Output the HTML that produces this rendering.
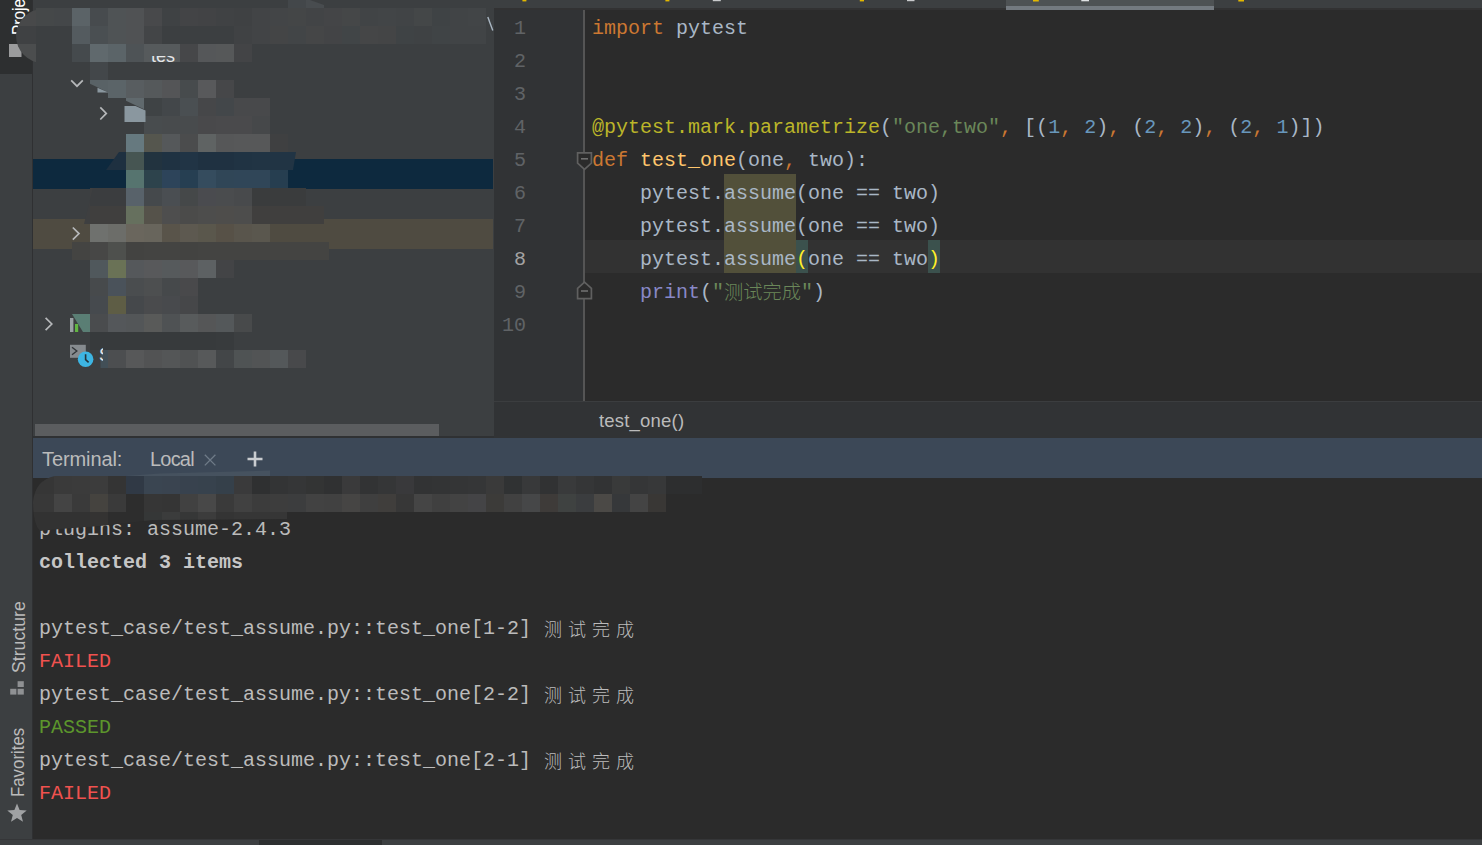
<!DOCTYPE html>
<html lang="zh">
<head>
<meta charset="utf-8">
<title>test_assume.py - PyCharm</title>
<style>
html,body{margin:0;padding:0;}
body{width:1482px;height:845px;overflow:hidden;background:#2b2b2b;position:relative;
  font-family:"Liberation Sans","Noto Sans CJK SC",sans-serif;color:#bbbbbb;}
.abs{position:absolute;}
svg{display:block;}
/* left tool strip */
#strip{left:0;top:0;width:33px;height:839px;background:#3c3f41;}
#strip .sel{left:0;top:0;width:32px;height:74px;background:#2d2f30;}
#strip .edge{left:32px;top:0;width:1px;height:839px;background:#2f3032;}
.vtxt{position:absolute;transform-origin:0 0;transform:rotate(-90deg);white-space:nowrap;font-size:18px;color:#bbbbbb;line-height:20px;height:20px;}
/* project panel */
#proj{left:33px;top:0;width:461px;height:438px;background:#3c3f41;overflow:hidden;}
#proj .rowsel{left:0;top:159px;width:460px;height:30px;background:#0d293e;}
#proj .rowhl{left:0;top:219px;width:460px;height:30px;background:#4f4b41;}
#proj .hscroll{left:2px;top:424px;width:404px;height:12px;background:#5b5d5f;}
#proj .hbot{left:0;top:436px;width:461px;height:2px;background:#2f3133;}
#proj .ptxt{position:absolute;font-size:18px;color:#bbbbbb;line-height:30px;white-space:nowrap;}
/* editor */
#tabs{left:494px;top:0;width:988px;height:7.5px;background:#3c3f41;}
#tabs2{left:494px;top:7.5px;width:988px;height:2.5px;background:#323233;}
#tabsel{left:1006px;top:0;width:208px;height:6px;background:#4e5254;}
#tabsel2{left:1006px;top:6px;width:208px;height:4px;background:#747a80;}
#gutter{left:494px;top:10px;width:89px;height:391px;background:#313335;}
#gline{left:583px;top:10px;width:2px;height:391px;background:#555555;}
#editor{left:585px;top:10px;width:897px;height:391px;background:#2b2b2b;}
#curline{left:585px;top:240px;width:897px;height:33px;background:#323232;}
#usage{left:724px;top:174px;width:72px;height:99px;background:#52503a;}
.brace{top:240px;width:12px;height:33px;background:#3b514d;}
.mono{font-family:"Liberation Mono","Noto Sans CJK SC",monospace;font-size:20px;white-space:pre;}
.ln{position:absolute;left:494px;width:32px;text-align:right;color:#606366;height:33px;line-height:33px;}
.ln.cur{color:#a4a3a3;}
.cl{position:absolute;left:592px;height:33px;line-height:33px;color:#a9b7c6;}
.kw{color:#cc7832}.fn{color:#ffc66d}.dec{color:#bbb529}.str{color:#6a8759}.num{color:#6897bb}.bi{color:#8888c6}.br{color:#ffef28}
.cjk{font-family:"Noto Sans CJK SC",sans-serif;line-height:0;font-size:19.25px;font-weight:300;position:relative;top:1.3px;}
/* breadcrumbs */
#crumbs{left:494px;top:401px;width:988px;height:37px;background:#313335;}
#crumbs .top{left:0;top:0;width:988px;height:1px;background:#3b3d3f;}
#crumbs .t{position:absolute;left:105px;top:6px;font-size:18.5px;letter-spacing:0.2px;line-height:28px;color:#bbbbbb;white-space:nowrap;}
/* terminal */
#thead{left:33px;top:438px;width:1449px;height:40px;background:#3c4857;}
#thead .t{position:absolute;top:7px;font-size:20px;line-height:28px;color:#bbbbbb;white-space:nowrap;}
#term{left:33px;top:478px;width:1449px;height:361px;background:#2b2b2b;overflow:hidden;}
.tl{position:absolute;left:39px;height:33px;line-height:33px;color:#bbbbbb;}
.tl b{color:#c6c6c6;}
.red{color:#f0524f}.grn{color:#5c962c}
.tcjk{font-family:"Noto Sans CJK SC",sans-serif;font-size:18px;letter-spacing:6px;line-height:0;font-weight:300;position:relative;top:1.5px;left:1px;}
#bottom{left:0;top:839px;width:1482px;height:6px;background:#3c3f41;}
#bottom .sel{left:259px;top:1px;width:123px;height:5px;background:#2d2f30;}
#bottom .top{left:0;top:0;width:1482px;height:1px;background:#353638;}
</style>
</head>
<body>
<!-- left tool window strip -->
<div id="strip" class="abs">
  <div class="abs sel"></div>
  <div class="abs edge"></div>
  <div class="vtxt" style="left:9px;top:34.5px;color:#ffffff;transform:rotate(-90deg) scaleX(0.86);">Project</div>
  <svg class="abs" style="left:9px;top:44px" width="14" height="14"><rect x="0" y="0" width="12.5" height="13" fill="#9b9c9d"/></svg>
  <div class="vtxt" style="left:8.5px;top:672.8px;transform:rotate(-90deg) scaleX(0.982);">Structure</div>
  <svg class="abs" style="left:10px;top:681px" width="15" height="15"><rect x="7.6" y="0.2" width="6.2" height="5.8" fill="#8f9193"/><rect x="0.2" y="7.8" width="6.2" height="5.8" fill="#8f9193"/><rect x="7.6" y="7.8" width="6.2" height="5.8" fill="#8f9193"/></svg>
  <div class="vtxt" style="left:8.4px;top:796.6px;transform:rotate(-90deg) scaleX(0.934);">Favorites</div>
  <svg class="abs" style="left:6.5px;top:803px" width="20" height="20" viewBox="0 0 20 20"><path d="M10 0.5 L12.6 7 L19.7 7.4 L14.2 11.9 L16 18.7 L10 14.9 L4 18.7 L5.8 11.9 L0.3 7.4 L7.4 7 Z" fill="#a0a2a4"/></svg>
</div>

<!-- project tool window -->
<div id="proj" class="abs">
  <div class="abs rowsel"></div>
  <div class="abs rowhl"></div>
  <svg class="abs" style="left:0;top:0" width="461" height="438">
<rect x="3" y="8" width="18" height="18" fill="#454849"/>
<rect x="21" y="8" width="18" height="18" fill="#444749"/>
<rect x="39" y="8" width="18" height="18" fill="#5b6367"/>
<rect x="57" y="8" width="18" height="18" fill="#474b4e"/>
<rect x="75" y="8" width="18" height="18" fill="#4f5355"/>
<rect x="93" y="8" width="18" height="18" fill="#505254"/>
<rect x="111" y="8" width="18" height="18" fill="#48494b"/>
<rect x="129" y="8" width="18" height="18" fill="#3f4244"/>
<rect x="147" y="8" width="18" height="18" fill="#434446"/>
<rect x="165" y="8" width="18" height="18" fill="#424345"/>
<rect x="183" y="8" width="18" height="18" fill="#404244"/>
<rect x="201" y="8" width="18" height="18" fill="#3f4143"/>
<rect x="219" y="8" width="18" height="18" fill="#424446"/>
<rect x="237" y="8" width="18" height="18" fill="#434547"/>
<rect x="255" y="8" width="18" height="18" fill="#444647"/>
<rect x="273" y="8" width="18" height="18" fill="#424446"/>
<rect x="291" y="8" width="18" height="18" fill="#444547"/>
<rect x="309" y="8" width="18" height="18" fill="#454748"/>
<rect x="327" y="8" width="18" height="18" fill="#414446"/>
<rect x="345" y="8" width="18" height="18" fill="#424547"/>
<rect x="363" y="8" width="18" height="18" fill="#414446"/>
<rect x="381" y="8" width="18" height="18" fill="#444748"/>
<rect x="399" y="8" width="18" height="18" fill="#3f4345"/>
<rect x="417" y="8" width="18" height="18" fill="#414446"/>
<rect x="435" y="8" width="18" height="18" fill="#424547"/>
<rect x="39" y="26" width="18" height="18" fill="#545b5f"/>
<rect x="57" y="26" width="18" height="18" fill="#4a4f52"/>
<rect x="75" y="26" width="18" height="18" fill="#4f5355"/>
<rect x="93" y="26" width="18" height="18" fill="#505254"/>
<rect x="111" y="26" width="18" height="18" fill="#434547"/>
<rect x="201" y="26" width="18" height="18" fill="#404244"/>
<rect x="219" y="26" width="18" height="18" fill="#424446"/>
<rect x="237" y="26" width="18" height="18" fill="#444546"/>
<rect x="255" y="26" width="18" height="18" fill="#424547"/>
<rect x="273" y="26" width="18" height="18" fill="#454647"/>
<rect x="291" y="26" width="18" height="18" fill="#434446"/>
<rect x="309" y="26" width="18" height="18" fill="#414547"/>
<rect x="327" y="26" width="18" height="18" fill="#454647"/>
<rect x="345" y="26" width="18" height="18" fill="#444546"/>
<rect x="363" y="26" width="18" height="18" fill="#3f4345"/>
<rect x="381" y="26" width="18" height="18" fill="#3f4244"/>
<rect x="399" y="26" width="18" height="18" fill="#404446"/>
<rect x="417" y="26" width="18" height="18" fill="#414446"/>
<rect x="435" y="26" width="18" height="18" fill="#414446"/>
<rect x="39" y="44" width="18" height="18" fill="#454a4d"/>
<rect x="57" y="44" width="18" height="18" fill="#60696d"/>
<rect x="75" y="44" width="18" height="18" fill="#5b6468"/>
<rect x="93" y="44" width="18" height="18" fill="#4e5356"/>
<rect x="111" y="44" width="18" height="18" fill="#565a5c"/>
<rect x="129" y="44" width="18" height="18" fill="#565a5c"/>
<rect x="147" y="44" width="18" height="18" fill="#464749"/>
<rect x="165" y="44" width="18" height="18" fill="#555759"/>
<rect x="183" y="44" width="18" height="18" fill="#565859"/>
<rect x="201" y="44" width="18" height="18" fill="#434446"/>
<rect x="57" y="62" width="18" height="18" fill="#43474a"/>
<rect x="75" y="80" width="18" height="18" fill="#5b6468"/>
<rect x="93" y="80" width="18" height="18" fill="#585d60"/>
<rect x="111" y="80" width="18" height="18" fill="#55595b"/>
<rect x="129" y="80" width="18" height="18" fill="#545557"/>
<rect x="147" y="80" width="18" height="18" fill="#474b4d"/>
<rect x="165" y="80" width="18" height="18" fill="#58595b"/>
<rect x="183" y="80" width="18" height="18" fill="#464749"/>
<rect x="111" y="98" width="18" height="18" fill="#3f4345"/>
<rect x="129" y="98" width="18" height="18" fill="#43474a"/>
<rect x="147" y="98" width="18" height="18" fill="#4a4f52"/>
<rect x="165" y="98" width="18" height="18" fill="#464749"/>
<rect x="183" y="98" width="18" height="18" fill="#43474a"/>
<rect x="201" y="98" width="18" height="18" fill="#48494b"/>
<rect x="219" y="98" width="18" height="18" fill="#48494b"/>
<rect x="111" y="116" width="18" height="18" fill="#484c4e"/>
<rect x="129" y="116" width="18" height="18" fill="#484b4d"/>
<rect x="147" y="116" width="18" height="18" fill="#484b4d"/>
<rect x="165" y="116" width="18" height="18" fill="#49494b"/>
<rect x="183" y="116" width="18" height="18" fill="#4a4a4c"/>
<rect x="201" y="116" width="18" height="18" fill="#4a4a4c"/>
<rect x="219" y="116" width="18" height="18" fill="#46484a"/>
<rect x="93" y="134" width="18" height="18" fill="#66797f"/>
<rect x="111" y="134" width="18" height="18" fill="#55564e"/>
<rect x="129" y="134" width="18" height="18" fill="#55585a"/>
<rect x="147" y="134" width="18" height="18" fill="#4b4c4d"/>
<rect x="165" y="134" width="18" height="18" fill="#5f6363"/>
<rect x="183" y="134" width="18" height="18" fill="#565758"/>
<rect x="201" y="134" width="18" height="18" fill="#575859"/>
<rect x="219" y="134" width="18" height="18" fill="#575859"/>
<rect x="237" y="134" width="18" height="18" fill="#3f4041"/>
<rect x="93" y="152" width="18" height="18" fill="#465552"/>
<rect x="111" y="152" width="18" height="18" fill="#22333f"/>
<rect x="129" y="152" width="18" height="18" fill="#1f3242"/>
<rect x="147" y="152" width="18" height="18" fill="#213445"/>
<rect x="165" y="152" width="18" height="18" fill="#1f3141"/>
<rect x="183" y="152" width="18" height="18" fill="#1f3141"/>
<rect x="201" y="152" width="18" height="18" fill="#203343"/>
<rect x="219" y="152" width="18" height="18" fill="#213444"/>
<rect x="237" y="152" width="18" height="18" fill="#213444"/>
<rect x="93" y="170" width="18" height="18" fill="#56746f"/>
<rect x="111" y="170" width="18" height="18" fill="#2d434c"/>
<rect x="129" y="170" width="18" height="18" fill="#2d445a"/>
<rect x="147" y="170" width="18" height="18" fill="#263f52"/>
<rect x="165" y="170" width="18" height="18" fill="#354c5e"/>
<rect x="183" y="170" width="18" height="18" fill="#304657"/>
<rect x="201" y="170" width="18" height="18" fill="#304658"/>
<rect x="219" y="170" width="18" height="18" fill="#304658"/>
<rect x="237" y="170" width="18" height="18" fill="#263e50"/>
<rect x="57" y="188" width="18" height="18" fill="#3b3d3f"/>
<rect x="75" y="188" width="18" height="18" fill="#3b3d3f"/>
<rect x="93" y="188" width="18" height="18" fill="#58626a"/>
<rect x="111" y="188" width="18" height="18" fill="#45494c"/>
<rect x="129" y="188" width="18" height="18" fill="#4a4e52"/>
<rect x="147" y="188" width="18" height="18" fill="#454849"/>
<rect x="165" y="188" width="18" height="18" fill="#4a4b4f"/>
<rect x="183" y="188" width="18" height="18" fill="#4a4c4e"/>
<rect x="201" y="188" width="18" height="18" fill="#484a4c"/>
<rect x="219" y="188" width="18" height="18" fill="#3a3c3d"/>
<rect x="237" y="188" width="18" height="18" fill="#3a3c3d"/>
<rect x="255" y="188" width="18" height="18" fill="#3a3c3d"/>
<rect x="57" y="206" width="18" height="18" fill="#403f3e"/>
<rect x="75" y="206" width="18" height="18" fill="#403f3e"/>
<rect x="93" y="206" width="18" height="18" fill="#66705e"/>
<rect x="111" y="206" width="18" height="18" fill="#55524a"/>
<rect x="129" y="206" width="18" height="18" fill="#4e4e4e"/>
<rect x="147" y="206" width="18" height="18" fill="#4b4b4a"/>
<rect x="165" y="206" width="18" height="18" fill="#4d4d4c"/>
<rect x="183" y="206" width="18" height="18" fill="#4e4d4b"/>
<rect x="201" y="206" width="18" height="18" fill="#4d4d4c"/>
<rect x="219" y="206" width="18" height="18" fill="#403f3e"/>
<rect x="237" y="206" width="18" height="18" fill="#403f3e"/>
<rect x="255" y="206" width="18" height="18" fill="#403f3e"/>
<rect x="273" y="206" width="18" height="18" fill="#403f3e"/>
<rect x="57" y="224" width="18" height="18" fill="#6f716e"/>
<rect x="75" y="224" width="18" height="18" fill="#6c6d69"/>
<rect x="93" y="224" width="18" height="18" fill="#6a665d"/>
<rect x="111" y="224" width="18" height="18" fill="#68655c"/>
<rect x="129" y="224" width="18" height="18" fill="#59544a"/>
<rect x="147" y="224" width="18" height="18" fill="#5d5950"/>
<rect x="165" y="224" width="18" height="18" fill="#5a574c"/>
<rect x="183" y="224" width="18" height="18" fill="#575147"/>
<rect x="201" y="224" width="18" height="18" fill="#59554c"/>
<rect x="219" y="224" width="18" height="18" fill="#5a574e"/>
<rect x="39" y="242" width="18" height="18" fill="#444442"/>
<rect x="57" y="242" width="18" height="18" fill="#474746"/>
<rect x="75" y="242" width="18" height="18" fill="#4e504d"/>
<rect x="93" y="242" width="18" height="18" fill="#434341"/>
<rect x="111" y="242" width="18" height="18" fill="#444442"/>
<rect x="129" y="242" width="18" height="18" fill="#444442"/>
<rect x="147" y="242" width="18" height="18" fill="#434341"/>
<rect x="165" y="242" width="18" height="18" fill="#444442"/>
<rect x="183" y="242" width="18" height="18" fill="#444442"/>
<rect x="201" y="242" width="18" height="18" fill="#444442"/>
<rect x="219" y="242" width="18" height="18" fill="#444442"/>
<rect x="237" y="242" width="18" height="18" fill="#444442"/>
<rect x="255" y="242" width="18" height="18" fill="#444442"/>
<rect x="273" y="242" width="18" height="18" fill="#444442"/>
<rect x="57" y="260" width="18" height="18" fill="#50585c"/>
<rect x="75" y="260" width="18" height="18" fill="#6a7256"/>
<rect x="93" y="260" width="18" height="18" fill="#55585b"/>
<rect x="111" y="260" width="18" height="18" fill="#58595b"/>
<rect x="129" y="260" width="18" height="18" fill="#565a5c"/>
<rect x="147" y="260" width="18" height="18" fill="#58595b"/>
<rect x="165" y="260" width="18" height="18" fill="#5d6163"/>
<rect x="183" y="260" width="18" height="18" fill="#434446"/>
<rect x="57" y="278" width="18" height="18" fill="#474a4c"/>
<rect x="75" y="278" width="18" height="18" fill="#4a525a"/>
<rect x="93" y="278" width="18" height="18" fill="#4a4d4f"/>
<rect x="111" y="278" width="18" height="18" fill="#4d4f50"/>
<rect x="129" y="278" width="18" height="18" fill="#46494b"/>
<rect x="147" y="278" width="18" height="18" fill="#49494b"/>
<rect x="57" y="296" width="18" height="18" fill="#464a4e"/>
<rect x="75" y="296" width="18" height="18" fill="#5e5d45"/>
<rect x="93" y="296" width="18" height="18" fill="#45484b"/>
<rect x="111" y="296" width="18" height="18" fill="#4a4b4d"/>
<rect x="129" y="296" width="18" height="18" fill="#484a4d"/>
<rect x="147" y="296" width="18" height="18" fill="#464749"/>
<rect x="57" y="314" width="18" height="18" fill="#4a4c4e"/>
<rect x="75" y="314" width="18" height="18" fill="#54575a"/>
<rect x="93" y="314" width="18" height="18" fill="#535658"/>
<rect x="111" y="314" width="18" height="18" fill="#595a59"/>
<rect x="129" y="314" width="18" height="18" fill="#4f5254"/>
<rect x="147" y="314" width="18" height="18" fill="#585b5c"/>
<rect x="165" y="314" width="18" height="18" fill="#555657"/>
<rect x="183" y="314" width="18" height="18" fill="#54585a"/>
<rect x="201" y="314" width="18" height="18" fill="#484a4b"/>
<rect x="57" y="332" width="18" height="18" fill="#373a3c"/>
<rect x="75" y="332" width="18" height="18" fill="#373a3c"/>
<rect x="93" y="332" width="18" height="18" fill="#373a3c"/>
<rect x="111" y="332" width="18" height="18" fill="#373a3c"/>
<rect x="129" y="332" width="18" height="18" fill="#373a3c"/>
<rect x="147" y="332" width="18" height="18" fill="#373a3c"/>
<rect x="165" y="332" width="18" height="18" fill="#373a3c"/>
<rect x="183" y="332" width="18" height="18" fill="#383b3d"/>
<rect x="75" y="350" width="18" height="18" fill="#4c4e50"/>
<rect x="93" y="350" width="18" height="18" fill="#575859"/>
<rect x="111" y="350" width="18" height="18" fill="#525354"/>
<rect x="129" y="350" width="18" height="18" fill="#545657"/>
<rect x="147" y="350" width="18" height="18" fill="#505253"/>
<rect x="165" y="350" width="18" height="18" fill="#57595a"/>
<rect x="183" y="350" width="18" height="18" fill="#434648"/>
<rect x="201" y="350" width="18" height="18" fill="#4f5354"/>
<rect x="219" y="350" width="18" height="18" fill="#525455"/>
<rect x="237" y="350" width="18" height="18" fill="#54585a"/>
<rect x="255" y="350" width="18" height="18" fill="#48494b"/>
  </svg>
  <!-- tree icons, chevrons and visible remnants (coordinates relative to panel: x-33) -->
  <svg class="abs" style="left:0;top:0" width="461" height="438" viewBox="33 0 461 438">
    <!-- diagonal edge cells of the smudge -->
    <path d="M119 152 H126 V170 H106 Z" fill="#1e3040"/>
    <path d="M288 152 H296 L293 170 H288 Z" fill="#213444"/>
    <path d="M93 188 H90 V224 H84 Z" fill="#3e3f40"/>
    <path d="M90 80 H108 V92.3 L90 83.7 Z" fill="#596266"/>
    <path d="M126 98 H144 V109.3 L126 100.8 Z" fill="#60696d"/>
    <!-- chevrons -->
    <path d="M71.2 80.3 L77 86.2 L82.8 80.3" fill="none" stroke="#b6b8ba" stroke-width="1.7"/>
    <path d="M100.3 107.3 L106.3 113.4 L100.3 119.5" fill="none" stroke="#b6b8ba" stroke-width="1.7"/>
    <path d="M72.8 227.5 L79 233.6 L72.8 239.7" fill="none" stroke="#b6b8ba" stroke-width="1.7"/>
    <path d="M45.6 317.8 L51.8 324 L45.6 330.2" fill="none" stroke="#b6b8ba" stroke-width="1.7"/>
    <!-- folder icons -->
    <path d="M124.5 106 H135.5 L145.5 110.5 V122 H124.5 Z" fill="#8a979f"/>
    <path d="M97.5 87.8 L108.5 92.4 H97.5 Z" fill="#8a979f"/>
    <!-- library icon -->
    <rect x="70" y="318" width="3.4" height="14" fill="#9aa0a4"/>
    <rect x="75" y="324" width="3.2" height="8" fill="#62b543"/>
    <path d="M72 314 H90 V332 H83 Z" fill="#5a7e74"/>
    <rect x="100.5" y="350" width="7.5" height="18" fill="#424f57"/>
    <rect x="324" y="242" width="5" height="18" fill="#444442"/>
    <!-- scratches/console icon with clock -->
    <rect x="70" y="344.8" width="15.8" height="13" fill="#868b8f"/>
    <path d="M72 347.3 L76.8 351 L72 354.7" fill="none" stroke="#33373a" stroke-width="1.4"/>
    <circle cx="85.6" cy="359.3" r="7.8" fill="#3db5e3"/>
    <path d="M85.6 354.3 V359.6 L88.6 362.4" fill="none" stroke="#25333b" stroke-width="1.6"/>
    <!-- part of chevron icon at panel's right edge -->
    <path d="M487.8 17 L492.8 30.6" fill="none" stroke="#a9b6c2" stroke-width="1.4"/>
    <rect x="288" y="0" width="18" height="8" fill="#43474a"/>
    <path d="M306 0 H310 L324 5 V8 H306 Z" fill="#484c4f"/>
  </svg>
  <div class="abs" style="left:113px;top:55.5px;width:32px;height:6px;overflow:hidden;"><div class="ptxt" style="left:5px;top:-14.5px;color:#e4e6e8;">tes</div></div>
  <div class="abs" style="left:66px;top:346px;width:4px;height:18px;overflow:hidden;"><div class="ptxt" style="left:0;top:-6px;color:#e4e6e8;">S</div></div>
  <div class="abs hscroll"></div>
  <div class="abs hbot"></div>
</div>

<!-- left rounded end of the redaction smudge, overlapping the tool strip -->
<svg class="abs" style="left:14px;top:8px" width="24" height="56" viewBox="14 8 24 56">
  <defs><clipPath id="blobclip"><ellipse cx="43" cy="36" rx="27" ry="27"/></clipPath></defs>
  <g clip-path="url(#blobclip)">
    <rect x="14" y="8" width="22" height="18" fill="#48494a"/>
    <rect x="14" y="26" width="22" height="18" fill="#3f4143"/>
    <rect x="14" y="44" width="22" height="18" fill="#4b4d4e"/>
    <rect x="14" y="62" width="22" height="2" fill="#3c3f41"/>
  </g>
</svg>

<!-- editor tabs remnant -->
<div id="tabs" class="abs"></div>
<div id="tabs2" class="abs"></div>
<div id="tabsel" class="abs"></div>
<div id="tabsel2" class="abs"></div>
<svg class="abs" style="left:494px;top:0" width="988" height="3" viewBox="494 0 988 3">
  <rect x="522.4" y="0" width="4" height="1.4" fill="#e3b800"/>
  <rect x="665.4" y="0" width="4" height="1.4" fill="#e3b800"/>
  <rect x="712.8" y="0" width="8" height="1.2" fill="#c8cacc"/>
  <rect x="859.8" y="0" width="4.2" height="1.4" fill="#e3b800"/>
  <rect x="907" y="0" width="7.5" height="1.2" fill="#c8cacc"/>
  <rect x="1033" y="0" width="5.8" height="1.5" fill="#e3b800"/>
  <rect x="1081.3" y="0" width="7.7" height="1.3" fill="#e0e2e4"/>
  <rect x="1238.3" y="0" width="5.7" height="1.5" fill="#e3b800"/>
</svg>

<!-- editor -->
<div id="gutter" class="abs"></div>
<div id="editor" class="abs"></div>
<div id="curline" class="abs"></div>
<div id="gline" class="abs"></div>
<div id="usage" class="abs"></div>
<div class="abs brace" style="left:796px"></div>
<div class="abs brace" style="left:928px"></div>

<div class="ln mono" style="top:12px">1</div>
<div class="ln mono" style="top:45px">2</div>
<div class="ln mono" style="top:78px">3</div>
<div class="ln mono" style="top:111px">4</div>
<div class="ln mono" style="top:144px">5</div>
<div class="ln mono" style="top:177px">6</div>
<div class="ln mono" style="top:210px">7</div>
<div class="ln mono cur" style="top:243px">8</div>
<div class="ln mono" style="top:276px">9</div>
<div class="ln mono" style="top:309px">10</div>

<div class="cl mono" style="top:12px"><span class="kw">import</span> pytest</div>
<div class="cl mono" style="top:111px"><span class="dec">@pytest.mark.parametrize</span>(<span class="str">"one,two"</span><span class="kw">,</span> [(<span class="num">1</span><span class="kw">,</span> <span class="num">2</span>)<span class="kw">,</span> (<span class="num">2</span><span class="kw">,</span> <span class="num">2</span>)<span class="kw">,</span> (<span class="num">2</span><span class="kw">,</span> <span class="num">1</span>)])</div>
<div class="cl mono" style="top:144px"><span class="kw">def</span> <span class="fn">test_one</span>(one<span class="kw">,</span> two):</div>
<div class="cl mono" style="top:177px">    pytest.assume(one == two)</div>
<div class="cl mono" style="top:210px">    pytest.assume(one == two)</div>
<div class="cl mono" style="top:243px">    pytest.assume<span class="br">(</span>one == two<span class="br">)</span></div>
<div class="cl mono" style="top:276px">    <span class="bi">print</span>(<span class="str">"<span class="cjk">测试完成</span>"</span>)</div>

<!-- fold markers -->
<svg class="abs" style="left:575px;top:150px" width="20" height="22" viewBox="0 0 20 22"><path d="M2.6 2.8 H16.4 V13.2 L9.5 19.3 L2.6 13.2 Z" fill="#2b2b2b" stroke="#606060" stroke-width="1.7"/><path d="M6 8.8 H13" stroke="#707070" stroke-width="1.6"/></svg>
<svg class="abs" style="left:575px;top:279px" width="20" height="22" viewBox="0 0 20 22"><path d="M2.6 19.7 H16.4 V9.3 L9.5 3.2 L2.6 9.3 Z" fill="#2b2b2b" stroke="#606060" stroke-width="1.7"/><path d="M6 12 H13" stroke="#707070" stroke-width="1.6"/></svg>

<!-- breadcrumbs -->
<div id="crumbs" class="abs"><div class="abs top"></div><div class="t">test_one()</div></div>

<!-- terminal -->
<div id="thead" class="abs">
  <div class="t" style="left:9px;letter-spacing:-0.1px">Terminal:</div>
  <div class="t" style="left:117px;letter-spacing:-0.8px">Local</div>
  <svg class="abs" style="left:170px;top:15px" width="14" height="14" viewBox="0 0 14 14"><path d="M1.8 1.8 L12.4 12.4 M12.4 1.8 L1.8 12.4" stroke="#6f7b88" stroke-width="1.3" fill="none"/></svg>
  <svg class="abs" style="left:213px;top:11.5px" width="18" height="18" viewBox="0 0 18 18"><path d="M9 1.5 V16.5 M1.5 9 H16.5" stroke="#c9ccd0" stroke-width="2.6" fill="none"/></svg>
</div>
<div id="term" class="abs"></div>
<div class="tl mono" style="top:513px">plugins: assume-2.4.3</div>
<div class="tl mono" style="top:546px"><b>collected 3 items</b></div>
<div class="tl mono" style="top:612px">pytest_case/test_assume.py::test_one[1-2] <span class="tcjk">测试完成</span></div>
<div class="tl mono red" style="top:645px">FAILED</div>
<div class="tl mono" style="top:678px">pytest_case/test_assume.py::test_one[2-2] <span class="tcjk">测试完成</span></div>
<div class="tl mono grn" style="top:711px">PASSED</div>
<div class="tl mono" style="top:744px">pytest_case/test_assume.py::test_one[2-1] <span class="tcjk">测试完成</span></div>
<div class="tl mono red" style="top:777px">FAILED</div>

<svg class="abs" style="left:120px;top:468px" width="160" height="8" viewBox="120 468 160 8"><path d="M125 476 L160 473.5 L270 470.5 V476 Z" fill="#46525f"/></svg>
<!-- redaction smudge over first terminal line -->
<svg class="abs" style="left:33px;top:476px" width="700" height="60">
<defs><clipPath id="tclip"><path d="M22 0 Q2 4 0 26 Q0 48 7 55 L27 53 L67 50 L120 44 L254 43 L254 36 L633 36 L633 18 L678 18 L678 0 Z"/></clipPath></defs>
<g clip-path="url(#tclip)">
<rect x="0" y="0" width="21" height="18" fill="#363636"/>
<rect x="21" y="0" width="18" height="18" fill="#3a3a3a"/>
<rect x="39" y="0" width="18" height="18" fill="#3b3b3b"/>
<rect x="57" y="0" width="18" height="18" fill="#3c3c3c"/>
<rect x="75" y="0" width="18" height="18" fill="#343434"/>
<rect x="93" y="0" width="18" height="18" fill="#303945"/>
<rect x="111" y="0" width="18" height="18" fill="#3a4551"/>
<rect x="129" y="0" width="18" height="18" fill="#3a4450"/>
<rect x="147" y="0" width="18" height="18" fill="#38424e"/>
<rect x="165" y="0" width="18" height="18" fill="#37424d"/>
<rect x="183" y="0" width="18" height="18" fill="#35404a"/>
<rect x="201" y="0" width="18" height="18" fill="#3a3a3b"/>
<rect x="219" y="0" width="18" height="18" fill="#2f3031"/>
<rect x="237" y="0" width="18" height="18" fill="#333435"/>
<rect x="255" y="0" width="18" height="18" fill="#353637"/>
<rect x="273" y="0" width="18" height="18" fill="#333434"/>
<rect x="291" y="0" width="18" height="18" fill="#303132"/>
<rect x="309" y="0" width="18" height="18" fill="#3a3a3b"/>
<rect x="327" y="0" width="18" height="18" fill="#323334"/>
<rect x="345" y="0" width="18" height="18" fill="#353637"/>
<rect x="363" y="0" width="18" height="18" fill="#39393b"/>
<rect x="381" y="0" width="18" height="18" fill="#323334"/>
<rect x="399" y="0" width="18" height="18" fill="#333435"/>
<rect x="417" y="0" width="18" height="18" fill="#343536"/>
<rect x="435" y="0" width="18" height="18" fill="#353637"/>
<rect x="453" y="0" width="18" height="18" fill="#3a3a3a"/>
<rect x="471" y="0" width="18" height="18" fill="#303233"/>
<rect x="489" y="0" width="18" height="18" fill="#38393a"/>
<rect x="507" y="0" width="18" height="18" fill="#313233"/>
<rect x="525" y="0" width="18" height="18" fill="#393a3b"/>
<rect x="543" y="0" width="18" height="18" fill="#353637"/>
<rect x="561" y="0" width="18" height="18" fill="#323334"/>
<rect x="579" y="0" width="18" height="18" fill="#393a3a"/>
<rect x="597" y="0" width="18" height="18" fill="#353637"/>
<rect x="615" y="0" width="18" height="18" fill="#373839"/>
<rect x="633" y="0" width="18" height="18" fill="#2d2e2f"/>
<rect x="651" y="0" width="18" height="18" fill="#2d2e2f"/>
<rect x="0" y="18" width="21" height="18" fill="#383838"/>
<rect x="21" y="18" width="18" height="18" fill="#444444"/>
<rect x="39" y="18" width="18" height="18" fill="#3a3a3a"/>
<rect x="57" y="18" width="18" height="18" fill="#45433f"/>
<rect x="75" y="18" width="18" height="18" fill="#3a3a3a"/>
<rect x="93" y="18" width="18" height="18" fill="#2d2d2d"/>
<rect x="111" y="18" width="18" height="18" fill="#363636"/>
<rect x="129" y="18" width="18" height="18" fill="#353535"/>
<rect x="147" y="18" width="18" height="18" fill="#414141"/>
<rect x="165" y="18" width="18" height="18" fill="#484848"/>
<rect x="183" y="18" width="18" height="18" fill="#3a3a3a"/>
<rect x="201" y="18" width="18" height="18" fill="#414141"/>
<rect x="219" y="18" width="18" height="18" fill="#3c3c3c"/>
<rect x="237" y="18" width="18" height="18" fill="#3d3d3d"/>
<rect x="255" y="18" width="18" height="18" fill="#3c3d3e"/>
<rect x="273" y="18" width="18" height="18" fill="#424242"/>
<rect x="291" y="18" width="18" height="18" fill="#414141"/>
<rect x="309" y="18" width="18" height="18" fill="#464544"/>
<rect x="327" y="18" width="18" height="18" fill="#3f3f3f"/>
<rect x="345" y="18" width="18" height="18" fill="#403e3c"/>
<rect x="363" y="18" width="18" height="18" fill="#373737"/>
<rect x="381" y="18" width="18" height="18" fill="#454545"/>
<rect x="399" y="18" width="18" height="18" fill="#404040"/>
<rect x="417" y="18" width="18" height="18" fill="#434343"/>
<rect x="435" y="18" width="18" height="18" fill="#444446"/>
<rect x="453" y="18" width="18" height="18" fill="#3c3b39"/>
<rect x="471" y="18" width="18" height="18" fill="#414141"/>
<rect x="489" y="18" width="18" height="18" fill="#464748"/>
<rect x="507" y="18" width="18" height="18" fill="#3e3b39"/>
<rect x="525" y="18" width="18" height="18" fill="#3f4241"/>
<rect x="543" y="18" width="18" height="18" fill="#3b3d3f"/>
<rect x="561" y="18" width="18" height="18" fill="#4b4946"/>
<rect x="579" y="18" width="18" height="18" fill="#36383a"/>
<rect x="597" y="18" width="18" height="18" fill="#444444"/>
<rect x="615" y="18" width="18" height="18" fill="#393735"/>
<rect x="0" y="36" width="21" height="20" fill="#323232"/>
<rect x="21" y="36" width="18" height="20" fill="#323232"/>
<rect x="39" y="36" width="18" height="20" fill="#323232"/>
<rect x="57" y="36" width="18" height="20" fill="#343332"/>
<rect x="75" y="36" width="18" height="20" fill="#2d2d2d"/>
<rect x="93" y="36" width="18" height="20" fill="#2d2d2d"/>
<rect x="111" y="36" width="18" height="20" fill="#353737"/>
<rect x="129" y="36" width="18" height="20" fill="#3b3c3c"/>
<rect x="147" y="36" width="18" height="20" fill="#363737"/>
<rect x="165" y="36" width="18" height="20" fill="#3c3c3c"/>
<rect x="183" y="36" width="18" height="20" fill="#343434"/>
<rect x="201" y="36" width="18" height="20" fill="#363636"/>
<rect x="219" y="36" width="18" height="20" fill="#363636"/>
<rect x="237" y="36" width="18" height="20" fill="#363636"/>
</g>
</svg>

<div id="bottom" class="abs"><div class="abs top"></div><div class="abs sel"></div></div>
</body>
</html>
